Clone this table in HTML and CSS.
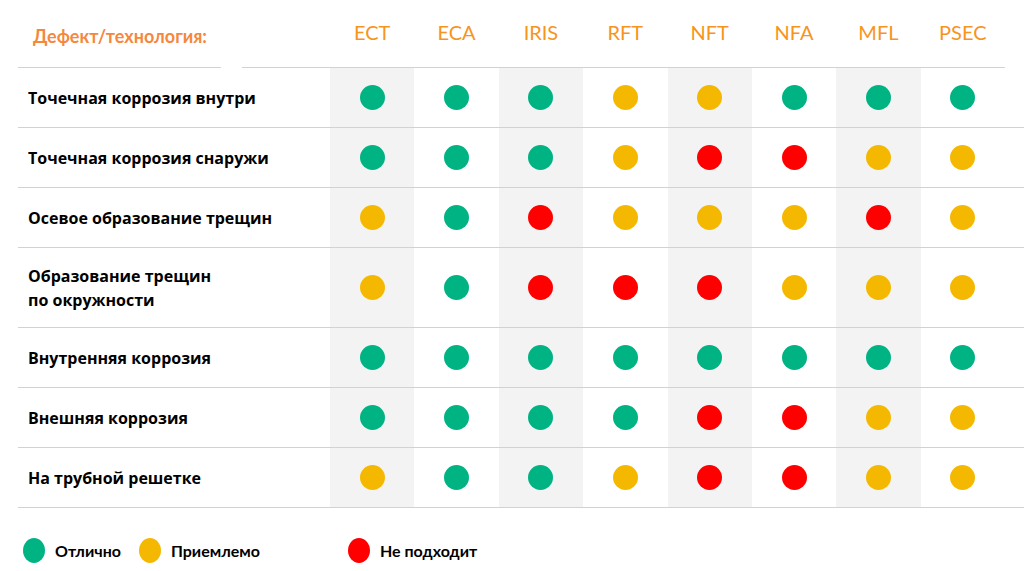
FILE: index.html
```html
<!DOCTYPE html>
<html lang="ru">
<head>
<meta charset="utf-8">
<link rel="stylesheet" href="styles.css">
</head>
<body>
<div class="page">
  <div class="head">
    <div class="head-label">Дефект/технология:</div>
    <div class="head-gap"></div>
    <div class="head-pad"></div>
    <div class="tech">ECT</div>
    <div class="tech">ECA</div>
    <div class="tech">IRIS</div>
    <div class="tech">RFT</div>
    <div class="tech">NFT</div>
    <div class="tech">NFA</div>
    <div class="tech">MFL</div>
    <div class="tech">PSEC</div>
  </div>
  <div class="row">
    <div class="label">Точечная коррозия внутри</div>
    <div class="cell"><span class="dot g"></span></div>
    <div class="cell"><span class="dot g"></span></div>
    <div class="cell"><span class="dot g"></span></div>
    <div class="cell"><span class="dot y"></span></div>
    <div class="cell"><span class="dot y"></span></div>
    <div class="cell"><span class="dot g"></span></div>
    <div class="cell"><span class="dot g"></span></div>
    <div class="cell"><span class="dot g"></span></div>
  </div>
  <div class="row">
    <div class="label">Точечная коррозия снаружи</div>
    <div class="cell"><span class="dot g"></span></div>
    <div class="cell"><span class="dot g"></span></div>
    <div class="cell"><span class="dot g"></span></div>
    <div class="cell"><span class="dot y"></span></div>
    <div class="cell"><span class="dot r"></span></div>
    <div class="cell"><span class="dot r"></span></div>
    <div class="cell"><span class="dot y"></span></div>
    <div class="cell"><span class="dot y"></span></div>
  </div>
  <div class="row">
    <div class="label">Осевое образование трещин</div>
    <div class="cell"><span class="dot y"></span></div>
    <div class="cell"><span class="dot g"></span></div>
    <div class="cell"><span class="dot r"></span></div>
    <div class="cell"><span class="dot y"></span></div>
    <div class="cell"><span class="dot y"></span></div>
    <div class="cell"><span class="dot y"></span></div>
    <div class="cell"><span class="dot r"></span></div>
    <div class="cell"><span class="dot y"></span></div>
  </div>
  <div class="row tall">
    <div class="label">Образование трещин<br>по окружности</div>
    <div class="cell"><span class="dot y"></span></div>
    <div class="cell"><span class="dot g"></span></div>
    <div class="cell"><span class="dot r"></span></div>
    <div class="cell"><span class="dot r"></span></div>
    <div class="cell"><span class="dot r"></span></div>
    <div class="cell"><span class="dot y"></span></div>
    <div class="cell"><span class="dot y"></span></div>
    <div class="cell"><span class="dot y"></span></div>
  </div>
  <div class="row">
    <div class="label">Внутренняя коррозия</div>
    <div class="cell"><span class="dot g"></span></div>
    <div class="cell"><span class="dot g"></span></div>
    <div class="cell"><span class="dot g"></span></div>
    <div class="cell"><span class="dot g"></span></div>
    <div class="cell"><span class="dot g"></span></div>
    <div class="cell"><span class="dot g"></span></div>
    <div class="cell"><span class="dot g"></span></div>
    <div class="cell"><span class="dot g"></span></div>
  </div>
  <div class="row">
    <div class="label">Внешняя коррозия</div>
    <div class="cell"><span class="dot g"></span></div>
    <div class="cell"><span class="dot g"></span></div>
    <div class="cell"><span class="dot g"></span></div>
    <div class="cell"><span class="dot g"></span></div>
    <div class="cell"><span class="dot r"></span></div>
    <div class="cell"><span class="dot r"></span></div>
    <div class="cell"><span class="dot y"></span></div>
    <div class="cell"><span class="dot y"></span></div>
  </div>
  <div class="row">
    <div class="label">На трубной решетке</div>
    <div class="cell"><span class="dot y"></span></div>
    <div class="cell"><span class="dot g"></span></div>
    <div class="cell"><span class="dot g"></span></div>
    <div class="cell"><span class="dot y"></span></div>
    <div class="cell"><span class="dot r"></span></div>
    <div class="cell"><span class="dot r"></span></div>
    <div class="cell"><span class="dot y"></span></div>
    <div class="cell"><span class="dot y"></span></div>
  </div>
  <div class="legend">
    <div class="item"><span class="ldot g"></span>Отлично</div>
    <div class="item"><span class="ldot y"></span>Приемлемо</div>
    <div class="item far"><span class="ldot r"></span>Не подходит</div>
  </div>
</div>
</body>
</html>
```

FILE: styles.css
```css
html, body {
  margin: 0;
  padding: 0;
  background: #ffffff;
}

.page {
  width: 1024px;
  height: 571px;
  padding-left: 18px;
  box-sizing: border-box;
  font-family: "Open Sans", "DejaVu Sans", sans-serif;
  overflow: hidden;
}

.head {
  display: grid;
  grid-template-columns: 203px 21px 88px repeat(8, 84.375px);
  height: 68px;
}

.head > div {
  border-bottom: 1px solid #d2d2d2;
}

.head > .head-gap {
  border-bottom: none;
}

.head-label {
  font-family: "Lato", "Open Sans", sans-serif;
  font-weight: 700;
  font-size: 18px;
  color: #f5883c;
  padding: 26px 0 0 15px;
  line-height: 20px;
  white-space: nowrap;
}

.tech {
  font-family: "Lato", "Open Sans", sans-serif;
  font-weight: 400;
  font-size: 20px;
  line-height: 20px;
  color: #f7941d;
  text-align: center;
  padding-top: 22px;
}

.row {
  display: grid;
  grid-template-columns: 312px repeat(8, 84.375px);
  height: 60px;
  border-bottom: 1px solid #d2d2d2;
  box-sizing: border-box;
}

.row.tall {
  height: 80px;
}

.label {
  display: flex;
  align-items: center;
  padding-left: 10px;
  padding-top: 1px;
  font-weight: 700;
  font-size: 16px;
  line-height: 24px;
  color: #000000;
}

.cell {
  display: flex;
  align-items: center;
  justify-content: center;
}

.cell:nth-child(even) {
  background: #f3f3f3;
}

.dot {
  width: 25px;
  height: 25px;
  border-radius: 50%;
}

.g { background: #00b383; }
.y { background: #f5b800; }
.r { background: #ff0000; }

.legend {
  display: flex;
  align-items: center;
  padding-left: 5px;
  margin-top: 30px;
  gap: 18px;
}

.item {
  display: flex;
  align-items: center;
  gap: 10px;
  font-family: "Lato", "Open Sans", sans-serif;
  font-weight: 700;
  font-size: 16px;
  color: #000000;
}

.item.far {
  margin-left: 70px;
}

.ldot {
  width: 22px;
  height: 25px;
  border-radius: 50%;
}
```
